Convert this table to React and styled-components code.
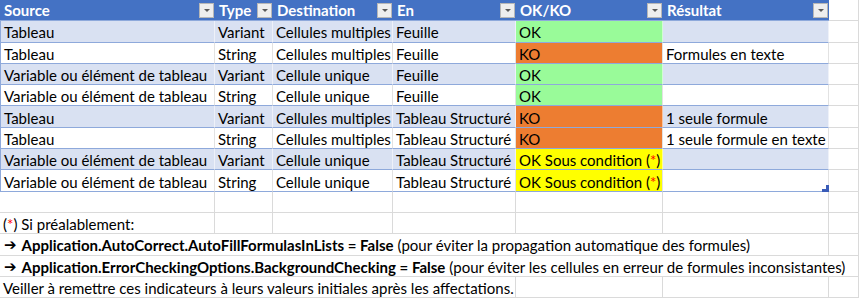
import React from 'react';
import styled, { createGlobalStyle } from 'styled-components';

const COLUMNS = '215px 58px 120px 123px 147px 166px 30px';

const GlobalStyle = createGlobalStyle`
    body {
        margin: 0;
        background: #ffffff;
        font-family: Lato, "Open Sans", sans-serif;
        font-size: 15px;
        color: #000000;
    }
`;

const Sheet = styled.div`
    width: 859px;
    height: 300px;
    overflow: hidden;
`;

const Row = styled.div`
    display: grid;
    grid-template-columns: ${COLUMNS};
    height: 21.3px;
`;

const HeaderCell = styled.div`
    display: flex;
    align-items: center;
    justify-content: space-between;
    padding: 0 1px 0 4px;
    background: #4472c4;
    color: #ffffff;
    font-weight: 700;
    border-bottom: 1px solid #8ea9db;
    box-sizing: border-box;
    white-space: nowrap;
`;

const Filter = styled.span`
    display: flex;
    align-items: center;
    justify-content: center;
    width: 15px;
    height: 15px;
    box-sizing: border-box;
    background: #eeeeee;
    border: 1px solid #b7b7b7;
    &::after {
        content: '';
        border-left: 3px solid transparent;
        border-right: 3px solid transparent;
        border-top: 3px solid #5a5a5a;
    }
`;

const STATUS = {
    ok: '#99fb99',
    ko: '#ed7d31',
    cond: '#ffff00',
};

const Cell = styled.div`
    position: relative;
    display: flex;
    align-items: center;
    padding: 2px 0 0 3px;
    box-sizing: border-box;
    white-space: nowrap;
    background: ${p => (p.$status ? STATUS[p.$status] : p.$band ? '#d9e1f2' : '#ffffff')};
    border-bottom: 1px solid #8ea9db;
    border-right: 1px solid ${p => (p.$band ? 'rgba(255,255,255,0.55)' : '#e2e2e2')};
    &:first-child {
        border-left: 1px solid #8ea9db;
    }
    &:last-child {
        border-right: 2px solid #9fb6e0;
    }
`;

const SheetCell = styled.div`
    display: flex;
    align-items: center;
    padding: 2px 0 0 3px;
    box-sizing: border-box;
    white-space: nowrap;
    grid-column: span ${p => p.$span || 1};
    border-bottom: 1px solid #dadada;
    border-right: 1px solid #dadada;
    font-weight: 400;
`;

const Star = styled.span`
    color: #ff0000;
`;

const Strong = styled.b`
    font-weight: 700;
    margin-right: 4px;
`;

const Arrow = styled.span`
    font-family: "DejaVu Sans", sans-serif;
    font-size: 15px;
    font-weight: 700;
    margin: 0 5px 0 1px;
`;

const Handle = styled.svg`
    position: absolute;
    right: -1px;
    bottom: -1px;
`;

const headers = ['Source', 'Type', 'Destination', 'En', 'OK/KO', 'Résultat'];

const rows = [
    ['Tableau', 'Variant', 'Cellules multiples', 'Feuille', 'ok', ''],
    ['Tableau', 'String', 'Cellules multiples', 'Feuille', 'ko', 'Formules en texte'],
    ['Variable ou élément de tableau', 'Variant', 'Cellule unique', 'Feuille', 'ok', ''],
    ['Variable ou élément de tableau', 'String', 'Cellule unique', 'Feuille', 'ok', ''],
    ['Tableau', 'Variant', 'Cellules multiples', 'Tableau Structuré', 'ko', '1 seule formule'],
    ['Tableau', 'String', 'Cellules multiples', 'Tableau Structuré', 'ko', '1 seule formule en texte'],
    ['Variable ou élément de tableau', 'Variant', 'Cellule unique', 'Tableau Structuré', 'cond', ''],
    ['Variable ou élément de tableau', 'String', 'Cellule unique', 'Tableau Structuré', 'cond', ''],
];

const statusText = status => {
    if (status === 'ok') return 'OK';
    if (status === 'ko') return 'KO';
    return (
        <>
            OK Sous condition (<Star>*</Star>)
        </>
    );
};

const EmptyCells = ({ count }) =>
    Array.from({ length: count }, (_, i) => <SheetCell key={i} />);

const App = () => {
    return (
        <Sheet>
            <GlobalStyle />
            <Row>
                {headers.map(h => (
                    <HeaderCell key={h}>
                        {h}
                        <Filter />
                    </HeaderCell>
                ))}
                <SheetCell />
            </Row>
            {rows.map((r, i) => {
                const band = i % 2 === 0;
                const last = i === rows.length - 1;
                return (
                    <Row key={i}>
                        <Cell $band={band}>{r[0]}</Cell>
                        <Cell $band={band}>{r[1]}</Cell>
                        <Cell $band={band}>{r[2]}</Cell>
                        <Cell $band={band}>{r[3]}</Cell>
                        <Cell $band={band} $status={r[4]}>{statusText(r[4])}</Cell>
                        <Cell $band={band}>
                            {r[5]}
                            {last && (
                                <Handle width="7" height="7" viewBox="0 0 7 7">
                                    <path d="M4 0H7V7H0V4H4Z" fill="#3a5cb8" />
                                </Handle>
                            )}
                        </Cell>
                        <SheetCell />
                    </Row>
                );
            })}
            <Row>
                <EmptyCells count={7} />
            </Row>
            <Row>
                <SheetCell>
                    (<Star>*</Star>) Si préalablement:
                </SheetCell>
                <EmptyCells count={6} />
            </Row>
            <Row>
                <SheetCell $span={6}>
                    <Arrow>➔</Arrow>
                    <Strong>Application.AutoCorrect.AutoFillFormulasInLists = False</Strong>
                    (pour éviter la propagation automatique des formules)
                </SheetCell>
                <SheetCell />
            </Row>
            <Row>
                <SheetCell $span={7}>
                    <Arrow>➔</Arrow>
                    <Strong>Application.ErrorCheckingOptions.BackgroundChecking = False</Strong>
                    (pour éviter les cellules en erreur de formules inconsistantes)
                </SheetCell>
            </Row>
            <Row>
                <SheetCell $span={4}>
                    Veiller à remettre ces indicateurs à leurs valeurs initiales après les affectations.
                </SheetCell>
                <EmptyCells count={3} />
            </Row>
        </Sheet>
    );
};

export default App;
